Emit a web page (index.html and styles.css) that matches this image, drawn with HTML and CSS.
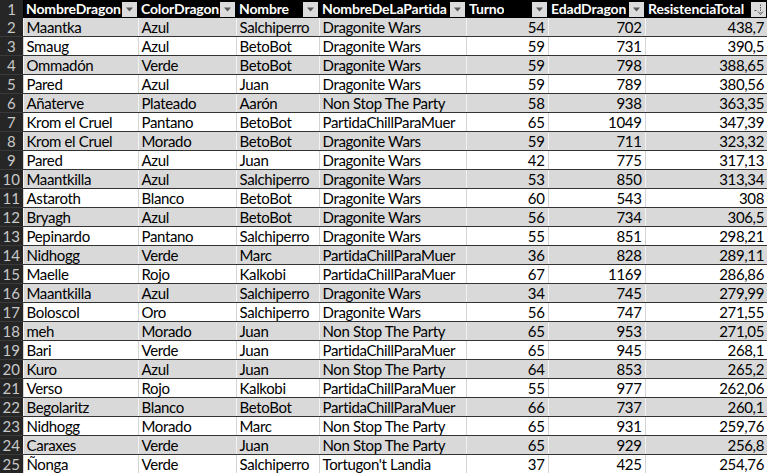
FILE: index.html
```html
<!DOCTYPE html>
<html>
<head>
<meta charset="utf-8">
<link rel="stylesheet" href="styles.css">
</head>
<body>
<table class="sheet">
<colgroup>
<col class="c-num"><col class="c1"><col class="c2"><col class="c3"><col class="c4"><col class="c5"><col class="c6"><col class="c7">
</colgroup>
<thead>
<tr>
<th class="num">1</th>
<th><div class="hd"><span>NombreDragon</span><span class="flt"><svg width="9" height="5" viewBox="0 0 9 5"><path d="M1 0.5h7L4.5 4.5z" fill="#595959"/></svg></span></div></th>
<th><div class="hd"><span>ColorDragon</span><span class="flt"><svg width="9" height="5" viewBox="0 0 9 5"><path d="M1 0.5h7L4.5 4.5z" fill="#595959"/></svg></span></div></th>
<th><div class="hd"><span>Nombre</span><span class="flt"><svg width="9" height="5" viewBox="0 0 9 5"><path d="M1 0.5h7L4.5 4.5z" fill="#595959"/></svg></span></div></th>
<th><div class="hd"><span>NombreDeLaPartida</span><span class="flt"><svg width="9" height="5" viewBox="0 0 9 5"><path d="M1 0.5h7L4.5 4.5z" fill="#595959"/></svg></span></div></th>
<th><div class="hd"><span>Turno</span><span class="flt"><svg width="9" height="5" viewBox="0 0 9 5"><path d="M1 0.5h7L4.5 4.5z" fill="#595959"/></svg></span></div></th>
<th><div class="hd"><span>EdadDragon</span><span class="flt"><svg width="9" height="5" viewBox="0 0 9 5"><path d="M1 0.5h7L4.5 4.5z" fill="#595959"/></svg></span></div></th>
<th><div class="hd"><span>ResistenciaTotal</span><span class="flt"><svg width="11" height="11" viewBox="0 0 11 11"><path d="M1.5 6.5h2" stroke="#595959" stroke-width="1"/><path d="M7.5 0.5v8" stroke="#595959" stroke-width="1" stroke-dasharray="1.5 1"/><path d="M5 7.5l2.5 3 2.5-3" stroke="#595959" stroke-width="1" fill="none"/></svg></span></div></th>
</tr>
</thead>
<tbody>
<tr><td class="num">2</td><td>Maantka</td><td>Azul</td><td>Salchiperro</td><td>Dragonite Wars</td><td class="r">54</td><td class="r">702</td><td class="r">438,7</td></tr>
<tr><td class="num">3</td><td>Smaug</td><td>Azul</td><td>BetoBot</td><td>Dragonite Wars</td><td class="r">59</td><td class="r">731</td><td class="r">390,5</td></tr>
<tr><td class="num">4</td><td>Ommadón</td><td>Verde</td><td>BetoBot</td><td>Dragonite Wars</td><td class="r">59</td><td class="r">798</td><td class="r">388,65</td></tr>
<tr><td class="num">5</td><td>Pared</td><td>Azul</td><td>Juan</td><td>Dragonite Wars</td><td class="r">59</td><td class="r">789</td><td class="r">380,56</td></tr>
<tr><td class="num">6</td><td>Añaterve</td><td>Plateado</td><td>Aarón</td><td>Non Stop The Party</td><td class="r">58</td><td class="r">938</td><td class="r">363,35</td></tr>
<tr><td class="num">7</td><td>Krom el Cruel</td><td>Pantano</td><td>BetoBot</td><td>PartidaChillParaMuer</td><td class="r">65</td><td class="r">1049</td><td class="r">347,39</td></tr>
<tr><td class="num">8</td><td>Krom el Cruel</td><td>Morado</td><td>BetoBot</td><td>Dragonite Wars</td><td class="r">59</td><td class="r">711</td><td class="r">323,32</td></tr>
<tr><td class="num">9</td><td>Pared</td><td>Azul</td><td>Juan</td><td>Dragonite Wars</td><td class="r">42</td><td class="r">775</td><td class="r">317,13</td></tr>
<tr><td class="num">10</td><td>Maantkilla</td><td>Azul</td><td>Salchiperro</td><td>Dragonite Wars</td><td class="r">53</td><td class="r">850</td><td class="r">313,34</td></tr>
<tr><td class="num">11</td><td>Astaroth</td><td>Blanco</td><td>BetoBot</td><td>Dragonite Wars</td><td class="r">60</td><td class="r">543</td><td class="r">308</td></tr>
<tr><td class="num">12</td><td>Bryagh</td><td>Azul</td><td>BetoBot</td><td>Dragonite Wars</td><td class="r">56</td><td class="r">734</td><td class="r">306,5</td></tr>
<tr><td class="num">13</td><td>Pepinardo</td><td>Pantano</td><td>Salchiperro</td><td>Dragonite Wars</td><td class="r">55</td><td class="r">851</td><td class="r">298,21</td></tr>
<tr><td class="num">14</td><td>Nidhogg</td><td>Verde</td><td>Marc</td><td>PartidaChillParaMuer</td><td class="r">36</td><td class="r">828</td><td class="r">289,11</td></tr>
<tr><td class="num">15</td><td>Maelle</td><td>Rojo</td><td>Kalkobi</td><td>PartidaChillParaMuer</td><td class="r">67</td><td class="r">1169</td><td class="r">286,86</td></tr>
<tr><td class="num">16</td><td>Maantkilla</td><td>Azul</td><td>Salchiperro</td><td>Dragonite Wars</td><td class="r">34</td><td class="r">745</td><td class="r">279,99</td></tr>
<tr><td class="num">17</td><td>Boloscol</td><td>Oro</td><td>Salchiperro</td><td>Dragonite Wars</td><td class="r">56</td><td class="r">747</td><td class="r">271,55</td></tr>
<tr><td class="num">18</td><td>meh</td><td>Morado</td><td>Juan</td><td>Non Stop The Party</td><td class="r">65</td><td class="r">953</td><td class="r">271,05</td></tr>
<tr><td class="num">19</td><td>Bari</td><td>Verde</td><td>Juan</td><td>PartidaChillParaMuer</td><td class="r">65</td><td class="r">945</td><td class="r">268,1</td></tr>
<tr><td class="num">20</td><td>Kuro</td><td>Azul</td><td>Juan</td><td>Non Stop The Party</td><td class="r">64</td><td class="r">853</td><td class="r">265,2</td></tr>
<tr><td class="num">21</td><td>Verso</td><td>Rojo</td><td>Kalkobi</td><td>PartidaChillParaMuer</td><td class="r">55</td><td class="r">977</td><td class="r">262,06</td></tr>
<tr><td class="num">22</td><td>Begolaritz</td><td>Blanco</td><td>BetoBot</td><td>PartidaChillParaMuer</td><td class="r">66</td><td class="r">737</td><td class="r">260,1</td></tr>
<tr><td class="num">23</td><td>Nidhogg</td><td>Morado</td><td>Marc</td><td>Non Stop The Party</td><td class="r">65</td><td class="r">931</td><td class="r">259,76</td></tr>
<tr><td class="num">24</td><td>Caraxes</td><td>Verde</td><td>Juan</td><td>Non Stop The Party</td><td class="r">65</td><td class="r">929</td><td class="r">256,8</td></tr>
<tr><td class="num">25</td><td>Ñonga</td><td>Verde</td><td>Salchiperro</td><td>Tortugon't Landia</td><td class="r">37</td><td class="r">425</td><td class="r">254,76</td></tr>
</tbody>
</table>
</body>
</html>
```
FILE: styles.css
```css
html, body {
  margin: 0;
  padding: 0;
  background: #ffffff;
  overflow: hidden;
}
.sheet {
  border-collapse: collapse;
  table-layout: fixed;
  width: 767px;
  font-family: Lato, "Liberation Sans", sans-serif;
  font-size: 15px;
  letter-spacing: -0.35px;
  color: #000;
}
.c-num { width: 23px; }
.c1 { width: 115px; }
.c2 { width: 98px; }
.c3 { width: 83px; }
.c4 { width: 147px; }
.c5 { width: 82px; }
.c6 { width: 97px; }
.c7 { width: 122px; }

.sheet th, .sheet td {
  padding: 0 3px;
  white-space: nowrap;
  overflow: hidden;
  line-height: 18px;
  height: 18px;
}
.sheet thead th {
  background: #000;
  color: #fff;
  font-weight: bold;
  font-size: 14px;
  letter-spacing: -0.15px;
  text-align: left;
  padding: 0 1px 0 3px;
}
.hd {
  display: flex;
  align-items: center;
  justify-content: space-between;
  height: 18px;
}
.hd span:first-child { overflow: hidden; }
.flt {
  flex: none;
  width: 15px;
  height: 15px;
  background: #dcdcdc;
  display: flex;
  align-items: center;
  justify-content: center;
}
.sheet tbody td {
  border-bottom: 1px solid #333;
  border-left: 1px solid #d4d4d4;
}
.sheet tbody tr:nth-child(odd) td {
  background: #d9d9d9;
  border-left-color: #f2f2f2;
}
.sheet .num {
  background: #262626 !important;
  color: #c8c8c8;
  text-align: center;
  font-weight: normal;
  font-size: 15px;
  letter-spacing: 0;
  padding: 0;
  border-left: none;
  border-bottom: 1px solid #3a3a3a;
}
.sheet thead .num {
  text-align: center;
  padding: 0;
  border-bottom: none;
}
.r { text-align: right; }
```
